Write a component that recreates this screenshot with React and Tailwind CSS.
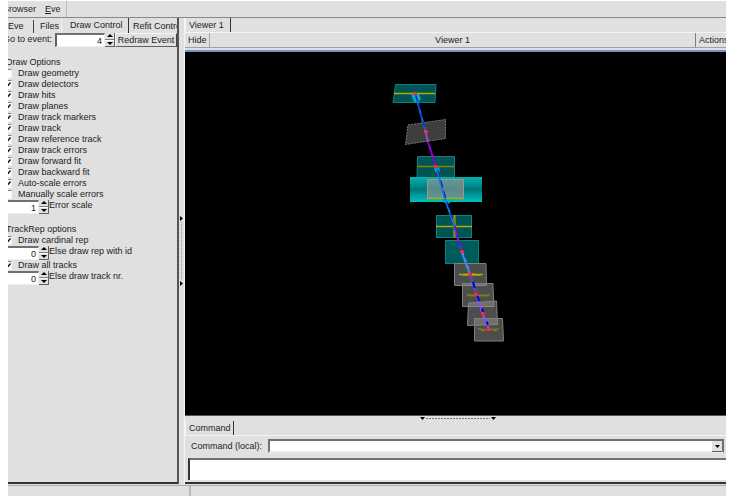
import React, { useState } from "react";

const drawOptions = [
  { label: "Draw geometry", on: false },
  { label: "Draw detectors", on: true },
  { label: "Draw hits", on: true },
  { label: "Draw planes", on: true },
  { label: "Draw track markers", on: true },
  { label: "Draw track", on: true },
  { label: "Draw reference track", on: true },
  { label: "Draw track errors", on: true },
  { label: "Draw forward fit", on: true },
  { label: "Draw backward fit", on: true },
  { label: "Auto-scale errors", on: true },
  { label: "Manually scale errors", on: false },
];

const CheckRow = ({ label, on }) => {
  const [checked, setChecked] = useState(on);
  return (
    <label className="flex h-[11px] items-center gap-[6px]">
      <span className="grid size-[9px] shrink-0">
        <input
          type="checkbox"
          checked={checked}
          onChange={(e) => setChecked(e.target.checked)}
          className="col-start-1 row-start-1 size-[9px] appearance-none border border-t-[#808080] border-l-[#808080] border-r-[#f4f4f4] border-b-[#f4f4f4] bg-white"
        />
        {checked && (
          <svg
            viewBox="0 0 9 9"
            className="pointer-events-none col-start-1 row-start-1 size-[9px]"
          >
            <path d="M2 4 L4 6.5 L7.5 2.5" fill="none" stroke="#111" strokeWidth="1.5" />
          </svg>
        )}
      </span>
      <span className="whitespace-nowrap">{label}</span>
    </label>
  );
};

const NumberBox = ({ id, initial, width, name }) => {
  const [value, setValue] = useState(initial);
  return (
    <span className="flex h-[14px] shrink-0">
      <input
        id={id}
        type="text"
        aria-label={name}
        value={value}
        onChange={(e) => setValue(e.target.value)}
        className={`${width} h-[14px] border border-t-2 border-l-2 border-t-[#707070] border-l-[#606060] border-r-[#eee] border-b-[#eee] bg-white pr-[2px] text-right outline-none`}
      />
      <span className="flex w-[10px] flex-col border-r border-b border-[#606060]">
        <button
          type="button"
          aria-label="Increase"
          className="flex flex-1 items-center justify-center border-b border-[#808080]"
          onClick={() => setValue(String(Number(value) + 1))}
        >
          <svg viewBox="0 0 6 3" className="h-[3px] w-[6px]">
            <path d="M0 3 L3 0 L6 3 Z" fill="#000" />
          </svg>
        </button>
        <button
          type="button"
          aria-label="Decrease"
          className="flex flex-1 items-center justify-center border-t border-white"
          onClick={() => setValue(String(Number(value) - 1))}
        >
          <svg viewBox="0 0 6 3" className="h-[3px] w-[6px]">
            <path d="M0 0 L3 3 L6 0 Z" fill="#000" />
          </svg>
        </button>
      </span>
    </span>
  );
};

const ControlPanel = () => {
  return (
    <section className="flex w-[171px] shrink-0 flex-col overflow-hidden border-r-2 border-b-2 border-r-[#555] border-b-[#333]">
      <nav className="flex h-[15px] shrink-0 items-end whitespace-nowrap">
        <button type="button" className="h-[13px] w-[26px] shrink-0 border-r border-[#444] text-left">
          Eve
        </button>
        <button type="button" className="h-[13px] w-[27px] shrink-0 pl-[6px] text-left">
          Files
        </button>
        <button
          type="button"
          className="h-[15px] w-[68px] shrink-0 border-r border-l border-l-[#f4f4f4] border-r-[#333] pl-[8px] text-left"
        >
          Draw Control
        </button>
        <button type="button" className="h-[13px] shrink-0 pl-[4px] text-left">
          Refit Control
        </button>
      </nav>

      <div className="-ml-[6px] flex flex-col">
        <div className="flex h-[14px] whitespace-nowrap">
          <label htmlFor="event" className="w-[53px] shrink-0 pl-px leading-[12px]">
            Go to event:
          </label>
          <NumberBox id="event" initial="4" width="w-[50px]" />
          <button
            type="button"
            className="h-[14px] flex-1 border border-t-[#f4f4f4] border-l-[#f4f4f4] border-r-[#444] border-b-[#606060]"
          >
            Redraw Event
          </button>
        </div>

        <fieldset className="mt-[10px] pl-px">
          <legend className="h-[11px] pl-[3px]">Draw Options</legend>
          {drawOptions.map((opt) => (
            <CheckRow key={opt.label} label={opt.label} on={opt.on} />
          ))}
          <div className="flex">
            <NumberBox id="scale" initial="1" width="w-[36px]" />
            <label htmlFor="scale">Error scale</label>
          </div>
        </fieldset>

        <fieldset className="mt-[10px] pl-px">
          <legend className="h-[11px] pl-[3px]">TrackRep options</legend>
          <CheckRow label="Draw cardinal rep" on />
          <div className="flex">
            <NumberBox id="rep" initial="0" width="w-[36px]" />
            <label htmlFor="rep">Else draw rep with id</label>
          </div>
          <CheckRow label="Draw all tracks" on />
          <div className="flex">
            <NumberBox id="track" initial="0" width="w-[36px]" />
            <label htmlFor="track">Else draw track nr.</label>
          </div>
        </fieldset>
      </div>
    </section>
  );
};

const Hit = ({ x, y }) => (
  <g>
    <rect x={x - 2} y={y - 1} width="4" height="3" fill="#f0203a" />
    <rect x={x - 1} y={y} width="1" height="1" fill="#ff7a2a" />
  </g>
);

const DetectorScene = () => {
  return (
    <svg viewBox="185 52 541 363" className="h-full w-full" role="img" aria-label="Event display">
      <defs>
        <linearGradient id="tube" x1="0" y1="0" x2="0" y2="1">
          <stop offset="0" stopColor="#00b4b4" />
          <stop offset="0.5" stopColor="#007878" />
          <stop offset="0.75" stopColor="#009c9c" />
          <stop offset="1" stopColor="#00c0c0" />
        </linearGradient>
      </defs>

      {/* teal planes */}
      <g fill="#005454" stroke="#108080" strokeWidth="1">
        <path d="M395.5 84.5 L436 84.5 L435 102.5 L393 102.5 Z" />
        <path d="M417.5 156.5 H454.5 V177.5 H417 Z" />
        <rect x="436.5" y="215.5" width="35" height="22" />
        <rect x="445.5" y="240.5" width="33" height="23" fill="#005c5c" />
      </g>

      {/* grey planes */}
      <path d="M408 125 L445.5 119.5 L445.5 138.5 L405.5 144.5 Z" fill="#3e3e3e" stroke="#777" strokeDasharray="2 1" />
      <g fill="#8c8c8c" fillOpacity="0.55" stroke="#808080" strokeWidth="1">
        <path d="M454.5 263.5 H486 L486.5 285.5 H454.5 Z" />
        <path d="M462.5 283.5 L493 283.5 V288 L494 306.5 H462.5 Z" />
        <path d="M468.5 303 L496.5 301 L497.5 324.5 L467.5 325.5 Z" />
        <path d="M474.5 318.5 H502.5 L503.5 341 H474.5 Z" />
      </g>

      {/* tube */}
      <rect x="410" y="177" width="72" height="25" fill="url(#tube)" />
      <rect x="427.5" y="179.5" width="36" height="19" fill="#909090" fillOpacity="0.65" stroke="#b48c84" strokeWidth="1" />

      {/* strips */}
      <g fill="none" stroke="#b4ac00" strokeWidth="1.3">
        <path d="M394 93.5 H435" />
        <path d="M417 166.5 H454" stroke="#7c8400" />
        <path d="M428 198.5 H463" />
        <path d="M436 226.5 H472" />
        <path d="M454.5 215 V237.5" strokeWidth="2.4" stroke="#948c00" />
        <path d="M459 274.5 H465 L470 273.5 L476 274.5 H483 M463 275 H480" />
        <path d="M467 294.5 L470 295.5 H487 L489 294.5" stroke="#847c10" strokeWidth="2" />
        <path d="M478 328.5 L482 329.5 H496 L499 328.5 M481 330.5 H484 M494 330.5 H497" stroke="#847c10" />
      </g>

      <g fill="#00b0b4">
        <path d="M411 94 H419 L421 99 L418 102 H414 Z" />
        <path d="M434 167 H439 L440 172 H435 Z" />
        <path d="M441 199 H452 L450 203 L447 204 L443 202 Z" />
      </g>

      {/* fitted track */}
      <g fill="none" strokeWidth="2">
        <path d="M415 93 L425.5 131.5" stroke="#0868e8" />
        <path d="M425.5 131.5 L428 142" stroke="#9850c0" />
        <path d="M428 142 L436 166.5" stroke="#8000e0" />
        <path d="M436 166.5 L445 199 L454.5 226" stroke="#1078e8" />
        <path d="M454.5 226 L461.5 251.5" stroke="#5a10f0" />
        <path d="M461.5 251.5 L470 274.5" stroke="#2098f0" />
        <path d="M470 274.5 L476.5 295" stroke="#4c50d0" />
        <path d="M476.5 295 L482.5 313.5 L489 329" stroke="#8850f0" />
      </g>
      <g fill="none" strokeWidth="1">
        <path d="M416 96 L426 132" stroke="#0020c0" strokeDasharray="5 4" />
        <path d="M429 146 L435 164" stroke="#d000d0" strokeDasharray="4 5" />
        <path d="M438 170 L446 199 L454 223" stroke="#0018b0" strokeDasharray="7 4" />
        <path d="M455 230 L461 249" stroke="#c010d0" strokeDasharray="4 4" />
        <path d="M463 252 L470 272" stroke="#d060e8" strokeDasharray="3 4" />
        <path d="M473 282 L477 295 L482 309 L488 325" stroke="#0000d8" strokeDasharray="6 8" strokeWidth="2" />
      </g>

      <Hit x={415} y={93} />
      <Hit x={426} y={131} />
      <Hit x={436} y={166} />
      <Hit x={462} y={251} />
      <Hit x={470} y={274} />
      <Hit x={476} y={294} />
      <Hit x={483} y={313} />
      <Hit x={489} y={329} />
    </svg>
  );
};

const Viewer = () => {
  return (
    <section className="flex min-h-0 flex-1 flex-col">
      <nav className="flex h-[15px] shrink-0 border-b border-[#f4f4f4]">
        <button type="button" className="w-[46px] border-r border-l border-l-[#f4f4f4] border-r-[#333] pt-px pl-[3px] text-left">
          Viewer 1
        </button>
      </nav>
      <div className="flex h-[15px] shrink-0 items-center overflow-hidden border-b border-[#a0a0a0] whitespace-nowrap">
        <button type="button" className="h-full w-[25px] border-r border-[#a8a8a8] pt-px pl-[3px] text-left">
          Hide
        </button>
        <span className="flex-1 pt-px text-center">Viewer 1</span>
        <button type="button" className="h-full w-[31px] border-l border-[#808080] pt-px pl-[3px] text-left">
          Actions
        </button>
      </div>
      <div className="mt-[2px] min-h-0 flex-1 border-t-2 border-b border-t-[#7094bc] border-b-[#555] bg-black">
        <DetectorScene />
      </div>
    </section>
  );
};

const CommandDock = () => {
  return (
    <section className="flex shrink-0 flex-col border-b-2 border-[#333]">
      <nav className="flex h-[15px] border-b border-[#f4f4f4]">
        <button type="button" className="w-[49px] border-r border-l border-l-[#f4f4f4] border-r-[#333] pt-px pl-[3px] text-left">
          Command
        </button>
      </nav>
      <div className="mt-[3px] flex h-[14px] items-center pr-[2px] pl-[6px]">
        <label htmlFor="command" className="w-[77px] shrink-0 whitespace-nowrap">
          Command (local):
        </label>
        <div className="relative flex-1">
          <select
            id="command"
            className="block h-[14px] w-full appearance-none border-2 border-t-[#707070] border-l-[#707070] border-r-[#707070] border-b-[#e8e8e8] bg-white outline-none"
          >
            <option></option>
          </select>
          <span className="pointer-events-none absolute top-[2px] right-[2px] flex h-[11px] w-[10px] items-center justify-center border-b border-[#606060] bg-[#e0e0e0]">
            <svg viewBox="0 0 5 3" className="h-[3px] w-[5px]">
              <path d="M0 0 H5 L2.5 3 Z" fill="#000" />
            </svg>
          </span>
        </div>
      </div>
      <textarea
        aria-label="Command output"
        className="mt-[5px] mb-[2px] ml-[3px] block h-[22px] resize-none border-t-2 border-l-2 border-t-[#707070] border-l-[#333] bg-white outline-none"
      />
    </section>
  );
};

const App = () => {
  return (
    <div className="h-screen bg-white py-px pr-[9px] pl-[8px] font-['Liberation_Sans',Arial,sans-serif] text-[9px] leading-[11px] text-[#222]">
      <div className="flex h-full flex-col overflow-hidden bg-[#e0e0e0]">
        <header className="flex h-[17px] shrink-0 border-b border-[#888]">
          <nav className="-ml-[5px] flex w-[64px] items-center gap-[9px] border-r border-[#bbb]">
            <button type="button">Browser</button>
            <button type="button">
              <u>E</u>ve
            </button>
          </nav>
        </header>

        <main className="flex min-h-0 flex-1">
          <ControlPanel />
          <div className="flex w-[6px] shrink-0 flex-col items-center justify-center border-r border-[#f4f4f4]">
            <svg viewBox="0 0 5 70" className="h-[70px] w-[5px]">
              <path d="M1 0 L4 2.5 L1 5 Z M1 65 L4 67.5 L1 70 Z" fill="#000" />
              <path d="M2.5 6 V64" stroke="#999" strokeDasharray="1 1" />
            </svg>
          </div>
          <div className="flex min-w-0 flex-1 flex-col">
            <Viewer />
            <div className="flex h-[5px] shrink-0 justify-center pl-[5px]">
              <svg viewBox="0 0 76 5" className="h-[5px] w-[76px]">
                <path d="M0 1 H5 L2.5 4 Z M71 1 H76 L73.5 4 Z" fill="#000" />
                <path d="M6 2.5 H70" stroke="#777" strokeDasharray="2 1" />
              </svg>
            </div>
            <CommandDock />
          </div>
        </main>

        <footer className="mt-px flex h-[11px] shrink-0 border-t border-[#aaa]">
          <div className="w-[183px] border-r-2 border-[#b8b8b8]" />
        </footer>
      </div>
    </div>
  );
};

export default App;
